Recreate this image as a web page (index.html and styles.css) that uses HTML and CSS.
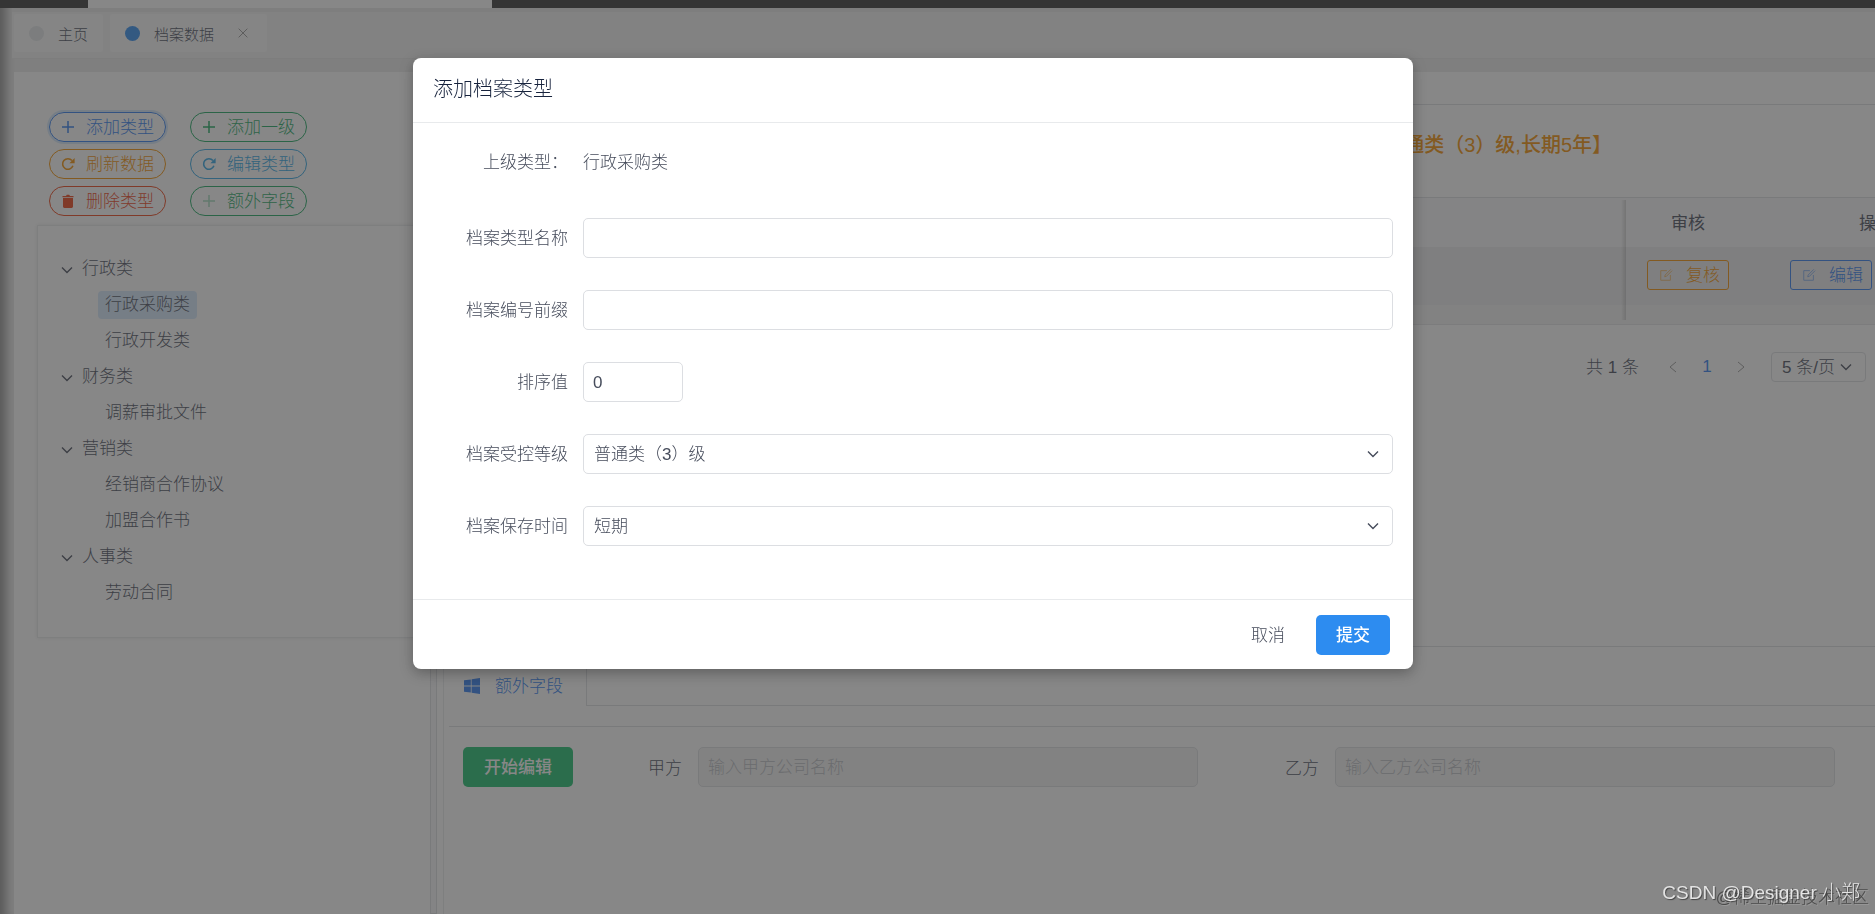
FILE: index.html
```html
<!DOCTYPE html>
<html lang="zh-CN">
<head>
    <meta charset="UTF-8">
    <meta name="viewport" content="width=device-width, initial-scale=1.0">
    <title>档案数据</title>
    <link rel="stylesheet" href="styles.css">
</head>
<body>
    <!-- Icons -->
    <svg class="sprite" aria-hidden="true">
        <symbol id="plus" viewBox="0 0 16 16"><path d="M8 2v12M2 8h12" fill="none" stroke="currentColor" stroke-width="1.5"/></symbol>
        <symbol id="refresh" viewBox="0 0 16 16"><path d="M12.9 9.8A5.3 5.3 0 1 1 12 4.6" fill="none" stroke="currentColor" stroke-width="1.6"/><path d="M14.6 2v5.2H9.4z" fill="currentColor"/></symbol>
        <symbol id="trash" viewBox="0 0 16 16"><path d="M3 5h10v8.6c0 .8-.6 1.4-1.4 1.4H4.400C3.600 15 3 14.400 3 13.600zM2.500 3h3.500l.8-1.200h2.400L10 3h3.500v1.200h-11z" fill="currentColor"/></symbol>
        <symbol id="edit" viewBox="0 0 16 16"><path d="M9 3H2v11h11V8M6.500 10l.5-2 6.500-6.500M6.500 10l2-.5L15 3" fill="none" stroke="currentColor"/></symbol>
        <symbol id="down" viewBox="0 0 16 16"><path d="M3 5.500l5 5 5-5" fill="none" stroke="currentColor" stroke-width="1.4"/></symbol>
        <symbol id="left" viewBox="0 0 16 16"><path d="M11 3L5 8l6 5" fill="none" stroke="currentColor"/></symbol>
        <symbol id="right" viewBox="0 0 16 16"><path d="M5 3l6 5-6 5" fill="none" stroke="currentColor"/></symbol>
        <symbol id="close" viewBox="0 0 16 16"><path d="M3 3l10 10M13 3L3 13" fill="none" stroke="currentColor"/></symbol>
        <symbol id="windows" viewBox="0 0 16 16"><path d="M0 2.300L6.800 1.400v6.200H0zM7.600 1.300L16 0v7.600H7.600zM0 8.400h6.800v6.200L0 13.700zM7.600 8.400H16V16l-8.400-1.300z" fill="currentColor"/></symbol>
    </svg>

    <div class="page">
        <div class="topbar"><div class="topbar-menu"></div></div>

        <!-- Tabs -->
        <nav class="tabs">
            <a class="tab" href="#"><span class="dot"></span>主页</a>
            <a class="tab active" href="#"><span class="dot"></span>档案数据<svg class="close"><use href="#close"/></svg></a>
        </nav>

        <main class="main">
            <!-- Left pane -->
            <section class="side">
                <div class="actions">
                    <button class="pill primary focus"><svg><use href="#plus"/></svg><span>添加类型</span></button>
                    <button class="pill success"><svg><use href="#plus"/></svg><span>添加一级</span></button>
                    <button class="pill warning"><svg><use href="#refresh"/></svg><span>刷新数据</span></button>
                    <button class="pill info"><svg><use href="#refresh"/></svg><span>编辑类型</span></button>
                    <button class="pill error"><svg><use href="#trash"/></svg><span>删除类型</span></button>
                    <button class="pill success light"><svg><use href="#plus"/></svg><span>额外字段</span></button>
                </div>
                <ul class="tree">
                    <li><svg><use href="#down"/></svg>行政类
                        <ul>
                            <li><span class="selected">行政采购类</span></li>
                            <li><span>行政开发类</span></li>
                        </ul>
                    </li>
                    <li><svg><use href="#down"/></svg>财务类
                        <ul>
                            <li><span>调薪审批文件</span></li>
                        </ul>
                    </li>
                    <li><svg><use href="#down"/></svg>营销类
                        <ul>
                            <li><span>经销商合作协议</span></li>
                            <li><span>加盟合作书</span></li>
                        </ul>
                    </li>
                    <li><svg><use href="#down"/></svg>人事类
                        <ul>
                            <li><span>劳动合同</span></li>
                        </ul>
                    </li>
                </ul>
            </section>

            <div class="splitter"></div>

            <!-- Right pane -->
            <section class="detail">
                <div class="records">
                    <h2 class="records-title">【行政采购类,普通类（3）级,长期5年】</h2>
                    <div class="table-wrap">
                        <table class="table">
                            <thead>
                                <tr>
                                    <th></th>
                                    <th class="col-check">审核</th>
                                    <th class="col-action">操作</th>
                                </tr>
                            </thead>
                            <tbody>
                                <tr>
                                    <td></td>
                                    <td class="col-check"><button class="small warning"><svg><use href="#edit"/></svg><span>复核</span></button></td>
                                    <td class="col-action"><button class="small primary"><svg><use href="#edit"/></svg><span>编辑</span></button></td>
                                </tr>
                            </tbody>
                        </table>
                    </div>
                    <div class="pager">
                        <span class="total">共 1 条</span>
                        <button class="page-btn" aria-label="上一页"><svg><use href="#left"/></svg></button>
                        <button class="page-btn current">1</button>
                        <button class="page-btn" aria-label="下一页"><svg><use href="#right"/></svg></button>
                        <div class="select page-size">
                            <select aria-label="每页条数"><option>5 条/页</option></select>
                            <svg><use href="#down"/></svg>
                        </div>
                    </div>
                </div>

                <div class="extra">
                    <div class="extra-tabs">
                        <a class="extra-tab" href="#"><svg><use href="#windows"/></svg><span>额外字段</span></a>
                        <div class="extra-line"></div>
                    </div>
                    <div class="extra-form">
                        <button class="btn success-fill">开始编辑</button>
                        <div class="fields">
                            <div class="field">
                                <label for="partyA">甲方</label>
                                <input id="partyA" type="text" placeholder="输入甲方公司名称" disabled>
                            </div>
                            <div class="field">
                                <label for="partyB">乙方</label>
                                <input id="partyB" type="text" placeholder="输入乙方公司名称" disabled>
                            </div>
                        </div>
                    </div>
                </div>
            </section>
        </main>
    </div>

    <!-- Modal -->
    <div class="mask">
        <div class="modal" role="dialog" aria-labelledby="modalTitle">
            <h1 class="modal-header" id="modalTitle">添加档案类型</h1>
            <form class="modal-body">
                <div class="form-item text-item">
                    <span class="label">上级类型：</span>
                    <span>行政采购类</span>
                </div>
                <div class="form-item">
                    <label class="label" for="typeName">档案类型名称</label>
                    <input class="input" id="typeName" type="text">
                </div>
                <div class="form-item">
                    <label class="label" for="prefix">档案编号前缀</label>
                    <input class="input" id="prefix" type="text">
                </div>
                <div class="form-item">
                    <label class="label" for="sort">排序值</label>
                    <input class="input number" id="sort" type="number" value="0">
                </div>
                <div class="form-item">
                    <label class="label" for="level">档案受控等级</label>
                    <div class="select">
                        <select class="input" id="level"><option>普通类（3）级</option></select>
                        <svg><use href="#down"/></svg>
                    </div>
                </div>
                <div class="form-item">
                    <label class="label" for="period">档案保存时间</label>
                    <div class="select">
                        <select class="input" id="period"><option>短期</option></select>
                        <svg><use href="#down"/></svg>
                    </div>
                </div>
            </form>
            <div class="modal-footer">
                <button class="btn text">取消</button>
                <button class="btn primary-fill">提交</button>
            </div>
        </div>
    </div>

    <div class="watermark dark">@稀土掘金技术社区</div>
    <div class="watermark">CSDN @Designer 小郑</div>
</body>
</html>
```
FILE: styles.css
```css
* {
    box-sizing: border-box;
}
body {
    margin: 0;
    height: 100vh;
    overflow: hidden;
    font-family: "Liberation Sans", "Noto Sans CJK SC", sans-serif;
    font-size: 17px;
    font-weight: 300;
    color: #464c5b;
    background-color: #fff;
}
button, input, select {
    font: inherit;
    color: inherit;
}
button {
    cursor: pointer;
}
a {
    color: inherit;
    text-decoration: none;
}
ul {
    list-style: none;
    margin: 0;
    padding: 0;
}
svg {
    width: 16px;
    height: 16px;
    flex: none;
}
.sprite {
    display: none;
}
.page {
    height: 100vh;
    display: flex;
    flex-direction: column;
    background-color: #ececec;
    box-shadow: inset 12px 0 10px -6px rgba(0, 0, 0, 0.4);
}
.topbar {
    height: 8px;
    padding-left: 88px;
    background-color: #343434;
}
.topbar-menu {
    width: 404px;
    height: 8px;
    background-color: #fff;
}

/* Tabs */
.tabs {
    display: flex;
    gap: 7px;
    height: 51px;
    margin-left: 12px;
    padding: 2px 2px 6px;
    background-color: #f3f3f3;
    border-top: 4px solid #e8e8e8;
    border-bottom: 1px solid #e6e6e6;
    font-size: 15px;
}
.tab {
    display: flex;
    align-items: center;
    height: 38px;
    padding: 0 15px;
    background-color: #fbfbfb;
    border-radius: 3px;
}
.dot {
    width: 15px;
    height: 15px;
    margin-right: 14px;
    border-radius: 50%;
    background-color: #e3e6e8;
}
.tab.active .dot {
    background-color: #2d8cf0;
}
.close {
    width: 14px;
    height: 14px;
    margin: 0 2px 0 22px;
    color: #888;
}

.main {
    flex: 1;
    display: flex;
    margin: 13px 0 0 14px;
    background-color: #fff;
}

/* Left pane */
.side {
    width: 416px;
    padding: 40px 0 0 23px;
}
.actions {
    display: grid;
    grid-template-columns: repeat(2, 117px);
    gap: 7px 24px;
    margin: 0 0 9px 12px;
}
.pill {
    display: flex;
    align-items: center;
    gap: 10px;
    height: 30px;
    padding: 0 0 0 10px;
    border: 1px solid;
    border-radius: 15px;
    background-color: transparent;
    white-space: nowrap;
}
.pill span, .small span, .extra-tab span {
    padding-bottom: 4px;
}
.pill.focus {
    box-shadow: 0 0 0 2px rgba(45, 140, 240, 0.2);
}
.pill.light svg {
    opacity: 0.4;
}
.primary {
    color: #2d7cf0;
}
.success {
    color: #19a85f;
}
.warning {
    color: #f59000;
}
.info {
    color: #2da5e5;
}
.error {
    color: #ed4014;
}
.tree {
    height: 413px;
    padding: 25px 0 0 21px;
    border: 1px solid #e8eaec;
    border-right: none;
    box-shadow: 0 0 4px rgba(0, 0, 0, 0.1);
    line-height: 36px;
}
.tree svg {
    margin-right: 7px;
    vertical-align: -4px;
}
.tree ul {
    padding-left: 39px;
}
.tree span {
    display: inline-block;
    padding: 0 7px;
    line-height: 28px;
    border-radius: 4px;
}
.tree .selected {
    background-color: #d5e8fc;
}

.splitter {
    width: 7px;
    border: 1px solid #dcdee2;
    background-color: #f8f8f9;
}

/* Right pane */
.detail {
    flex: 1;
    min-width: 0;
    display: flex;
    flex-direction: column;
    margin-left: 6px;
}
.records {
    height: 575px;
    padding-top: 32px;
    border-bottom: 1px solid #dcdee2;
}
.records-title {
    margin: 0;
    padding: 0 263px 0 0;
    height: 93px;
    border-top: 1px solid #dcdee2;
    font-size: 20px;
    font-weight: 500;
    line-height: 81px;
    text-align: right;
    color: #f59000;
}
.table-wrap {
    position: relative;
    overflow: hidden;
    height: 128px;
    background-color: #f3f3f3;
    border-top: 1px solid #dcdee2;
    border-bottom: 1px solid #e4e4e6;
}
/* Shadow of the fixed columns */
.table-wrap::after {
    content: "";
    position: absolute;
    top: 2px;
    right: 249px;
    width: 5px;
    height: 120px;
    background: linear-gradient(to right, rgba(0, 0, 0, 0), rgba(0, 0, 0, 0.16));
}
.table {
    width: calc(100% + 126px);
    table-layout: fixed;
    border-collapse: collapse;
}
.table th {
    height: 49px;
    padding: 0 0 3px;
    background-color: #f8f8f9;
    font-weight: 400;
}
.table td {
    height: 58px;
    padding: 0 0 2px;
    background-color: #ebebed;
}
.table .col-check {
    width: 126px;
    text-align: center;
}
.col-action {
    width: 250px;
}
.table td.col-action {
    padding-left: 39px;
}
.small {
    display: inline-flex;
    align-items: center;
    gap: 13px;
    height: 30px;
    width: 82px;
    padding: 0 0 0 11px;
    border: 1px solid;
    border-radius: 3px;
    background-color: transparent;
    white-space: nowrap;
    vertical-align: middle;
}
.small svg {
    width: 14px;
    height: 14px;
    opacity: 0.6;
}
.pager {
    display: flex;
    align-items: center;
    justify-content: flex-end;
    height: 30px;
    margin: 27px 9px 0 0;
}
.page-btn {
    display: flex;
    align-items: center;
    justify-content: center;
    width: 34px;
    height: 30px;
    padding: 0;
    border: none;
    background: none;
    color: #999;
}
.total {
    margin-right: 17px;
    padding-bottom: 4px;
}
.page-btn.current {
    color: #2d7cf0;
}
.select {
    position: relative;
    flex: 1;
}
.select select {
    width: 100%;
    appearance: none;
}
.select svg {
    position: absolute;
    right: 12px;
    top: 50%;
    margin-top: -8px;
    pointer-events: none;
}
.page-size {
    flex: none;
    width: 95px;
    margin-left: 13px;
}
.page-size select {
    height: 30px;
    padding: 0 10px;
    border: 1px solid #dcdee2;
    border-radius: 4px;
    background: none;
}

/* Extra fields */
.extra {
    flex: 1;
    border-left: 1px solid #e8eaec;
}
.extra-tabs {
    display: flex;
    height: 59px;
}
.extra-tab {
    display: flex;
    align-items: center;
    gap: 15px;
    width: 143px;
    padding: 19px 0 0 20px;
    border-right: 1px solid #dcdee2;
    color: #2d7cf0;
}
.extra-line {
    flex: 1;
    border-bottom: 1px solid #dcdee2;
}
.extra-form {
    display: flex;
    margin: 20px 0 0 5px;
    padding: 20px 40px 0 14px;
    border-top: 1px solid #dcdee2;
}
.btn {
    height: 40px;
    padding: 0 19px 4px;
    border: none;
    border-radius: 5px;
    color: #fff;
    font-weight: 500;
    white-space: nowrap;
}
.success-fill {
    width: 110px;
    background-color: #19be6b;
}
.primary-fill {
    width: 74px;
    background-color: #2d8cf0;
}
.btn.text {
    background: none;
    color: #464c5b;
    font-weight: 300;
}
.fields {
    flex: 1;
    display: flex;
    gap: 24px;
    margin-left: 12px;
}
.field {
    flex: 1;
    display: flex;
    align-items: center;
}
.field label {
    width: 97px;
    padding-bottom: 2px;
    text-align: right;
}
.field input {
    flex: 1;
    min-width: 0;
    height: 40px;
    margin-left: 16px;
    padding: 2px 9px 0;
    border: 1px solid #dcdee2;
    border-radius: 5px;
    background-color: #f3f3f3;
}
.field input::placeholder {
    color: #b8bbc2;
}

/* Modal */
.mask {
    position: fixed;
    inset: 0;
    display: flex;
    justify-content: center;
    align-items: flex-start;
    padding: 58px 49px 0 0;
    background-color: rgba(55, 55, 55, 0.6);
}
.modal {
    width: 1000px;
    background-color: #fff;
    border-radius: 8px;
    box-shadow: 0 4px 14px rgba(0, 0, 0, 0.3);
}
.modal-header {
    margin: 0;
    padding: 0 20px 2px;
    border-bottom: 1px solid #e8eaec;
    font-size: 20px;
    font-weight: 300;
    line-height: 62px;
    color: #17233d;
}
.modal-body {
    padding: 20px 20px 21px;
}
.form-item {
    display: flex;
    align-items: center;
    height: 40px;
    margin-bottom: 32px;
}
.text-item {
    height: 43px;
    padding-bottom: 8px;
}
.label {
    width: 135px;
    margin-right: 15px;
    padding-bottom: 4px;
    text-align: right;
}
.text-item .label {
    padding-bottom: 0;
}
.input {
    flex: 1;
    height: 40px;
    padding: 0 10px;
    border: 1px solid #dcdee2;
    border-radius: 5px;
    background-color: #fff;
}
.input.number {
    flex: none;
    width: 100px;
    padding: 2px 9px 0;
    appearance: textfield;
}
.modal-footer {
    display: flex;
    justify-content: flex-end;
    gap: 12px;
    padding: 15px 23px 14px;
    border-top: 1px solid #e8eaec;
}

.watermark {
    position: fixed;
    right: 15px;
    bottom: 8px;
    font-size: 19px;
    line-height: 26px;
    color: #e4e4e4;
    text-shadow: 1px 1px 1px #444;
}
.watermark.dark {
    right: 6px;
    bottom: 3px;
    font-size: 17px;
    color: #4a4a4a;
    text-shadow: 1px 1px 0 #999;
}
```
